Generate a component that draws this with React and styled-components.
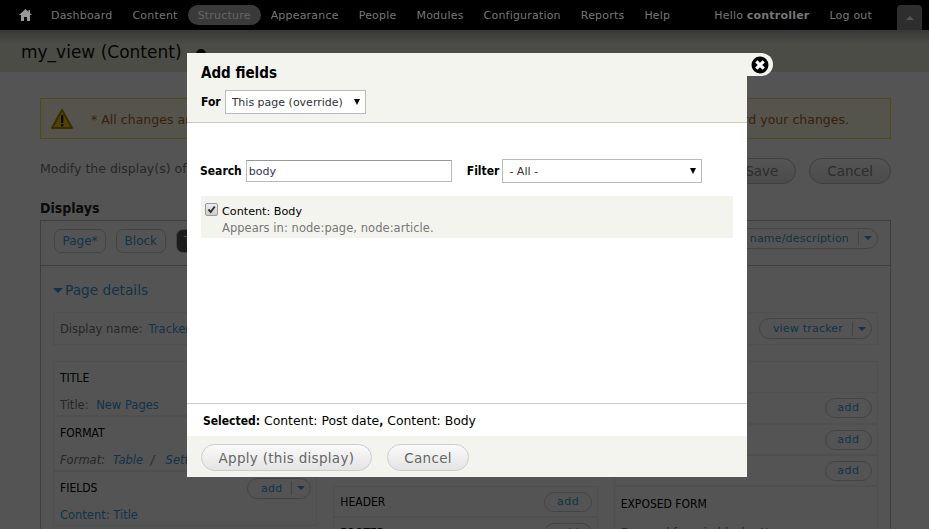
import React from 'react'
import styled, { createGlobalStyle } from 'styled-components'

const Global = createGlobalStyle`
  html, body { margin: 0; padding: 0; height: 529px; overflow: hidden; background: #fff; }
  body, input, select, button { font-family: "DejaVu Sans", Verdana, sans-serif; }
`

const boldFont = `"DejaVu Sans Condensed", "DejaVu Sans", sans-serif`
const link = 'rgb(55, 155, 215)'

const Page = styled.div`
  position: relative;
  width: 929px;
  height: 529px;
  overflow: hidden;
  color: #777;
  font-size: 12.5px;
`

const Toolbar = styled.div`
  position: relative;
  z-index: 2;
  display: flex;
  align-items: center;
  height: 30px;
  background: #000;
  padding: 0 0 0 19px;
  font-size: 11px;
  color: #777;
  letter-spacing: 0.2px;
  white-space: nowrap;
`

const HomeIcon = styled.svg`
  flex: none;
  width: 13px;
  height: 12px;
  margin-right: 9px;
  fill: #999;
`

const NavList = styled.div`
  display: flex;
  align-items: center;
`

const NavItem = styled.span`
  padding: 0 10px;
  height: 20px;
  line-height: 21px;
  border-radius: 10px;
  background: ${p => (p.$active ? '#3a3a3a' : 'transparent')};
  color: ${p => (p.$active ? '#666' : '#777')};
`

const UserMenu = styled.div`
  display: flex;
  align-items: center;
  margin-left: 34px;
  gap: 20px;
  line-height: 21px;
  b { font-weight: bold; }
`

const ToggleTab = styled.div`
  flex: none;
  width: 25px;
  height: 25px;
  margin-left: 25px;
  align-self: flex-end;
  background: #2e2e2e;
  border-radius: 4px 4px 0 0;
  display: flex;
  align-items: center;
  justify-content: center;
  &::after {
    content: '';
    border: 4px solid transparent;
    border-top: 0;
    border-bottom: 4px solid #555;
  }
`

const Header = styled.div`
  height: 42px;
  box-sizing: border-box;
  padding: 0 0 0 21px;
  background: linear-gradient(#a8a8a2, #e3e6d4 32%, #e3e6d4);
  font-size: 17px;
  color: #111;
  overflow: hidden;
`

const Crumb = styled.div`
  margin-top: -9px;
  height: 11px;
  line-height: 11px;
  font-size: 11.5px;
  color: ${link};
  white-space: nowrap;
`

const HeadLine = styled.div`
  display: flex;
  align-items: center;
  margin-top: 8px;
  height: 24px;
  &::after {
    content: '';
    width: 10px;
    height: 10px;
    margin: 4px 0 0 14px;
    border-radius: 50%;
    background: #111;
  }
`

const Content = styled.div`
  padding: 26px 38px 0 40px;
`

const Warning = styled.div`
  display: flex;
  align-items: center;
  height: 41px;
  box-sizing: border-box;
  border: 1px solid #ed5;
  background: #fffde8;
  color: #a8662a;
  padding-left: 10px;
  gap: 18px;
  white-space: nowrap;
  span { padding-top: 1px; letter-spacing: 0.02px; }
`

const WarnIcon = styled.svg`
  flex: none;
  width: 22px;
  height: 20px;
`

const ActionRow = styled.div`
  display: flex;
  align-items: center;
  margin-top: 18px;
  height: 28px;
`

const Lead = styled.span`
  margin-bottom: 6px;
`

const Grow = styled.div`
  flex: 1;
`

const PillButton = styled.div`
  height: 24px;
  line-height: 25px;
  padding: 0 17px;
  margin-left: 13px;
  border: 1px solid #bbb;
  border-radius: 14px;
  background: linear-gradient(#fff, #e4e4e4);
  font-size: 13.5px;
  color: #888;
`

const Title = styled.div`
  margin-top: 14px;
  font-family: ${boldFont};
  font-size: 14px;
  font-weight: bold;
  color: #222;
  line-height: 18px;
`

const TabBar = styled.div`
  display: flex;
  align-items: center;
  height: 46px;
  margin-top: 3px;
  box-sizing: border-box;
  border: 1px solid #bbb;
  padding: 0 12px 0 13px;
  gap: 10px;
`

const Tab = styled.div`
  height: 22px;
  line-height: 22px;
  margin-bottom: 4px;
  padding: 0 7.5px;
  border: 1px solid #ccc;
  border-radius: 7px;
  color: ${p => (p.$dark ? '#fff' : link)};
  background: ${p => (p.$dark ? '#555' : '#fff')};
  font-size: 12px;
`

const DropButton = styled.div`
  display: flex;
  align-items: center;
  height: ${p => p.$h || 19}px;
  margin-left: ${p => (p.$push ? 'auto' : '0')};
  margin-bottom: ${p => (p.$push ? '10px' : '0')};
  padding-left: 13px;
  border: 1px solid #ccc;
  border-radius: 11px;
  font-size: 11px;
  font-weight: normal;
  letter-spacing: 0.2px;
  color: ${link};
  font-family: "DejaVu Sans", sans-serif;
  span {
    display: flex;
    align-items: center;
    justify-content: center;
    width: 18px;
    height: 14px;
    margin-left: 9px;
    border-left: 1px solid #ccc;
  }
  span::after {
    content: '';
    border: 4px solid transparent;
    border-bottom: 0;
    border-top: 4px solid ${link};
  }
`

const Details = styled.div`
  border: 1px solid #bbb;
  border-top: 0;
  padding: 14px 12px 0 12px;
  height: 300px;
`

const DetailsTitle = styled.div`
  font-size: 13.7px;
  color: ${link};
  line-height: 20px;
  display: flex;
  align-items: center;
  gap: 2px;
  &::before {
    content: '';
    border: 5px solid transparent;
    border-bottom: 0;
    border-top: 5px solid ${link};
  }
`

const NameRow = styled.div`
  display: flex;
  align-items: center;
  height: 33px;
  box-sizing: border-box;
  margin-top: 12px;
  padding: 0 5px 0 6px;
  border: 1px solid #eee;
  font-size: 11.5px;
  a { color: ${link}; margin-left: 6px; }
`

const Columns = styled.div`
  display: grid;
  grid-template-columns: repeat(3, 1fr);
  gap: 16px;
  margin-top: 16px;
`

const Col = styled.div`
  padding-top: ${p => p.$top || 0}px;
`

const Bucket = styled.div`
  display: flex;
  align-items: center;
  justify-content: space-between;
  height: ${p => p.$h || 31}px;
  box-sizing: border-box;
  padding: 0 5px 0 6px;
  font-family: ${boldFont};
  font-size: 12px;
  font-weight: 500;
  color: #000;
  border: 1px solid #eee;
  border-bottom: ${p => (p.$open ? '0' : '1px solid #eee')};
  white-space: nowrap;
`

const Line = styled.div`
  height: ${p => p.$h || 22}px;
  line-height: ${p => p.$h || 22}px;
  box-sizing: border-box;
  padding: 0 6px;
  font-size: 11.5px;
  color: #777;
  white-space: nowrap;
  border: 1px solid #eee;
  border-top: 0;
  i { font-style: italic; }
  a { color: ${link}; margin-left: 4px; }
`

const PlainLink = styled.span`
  color: ${link};
`

const AddButton = styled.div`
  height: 18px;
  line-height: 18px;
  padding: 0 11.5px;
  border: 1px solid #ccc;
  border-radius: 10px;
  font-family: "DejaVu Sans", sans-serif;
  font-size: 11px;
  letter-spacing: 0.5px;
  color: ${link};
`

const Overlay = styled.div`
  position: absolute;
  inset: 0;
  z-index: 1;
  background: rgba(0, 0, 0, 0.67);
`

const Modal = styled.div`
  position: absolute;
  z-index: 3;
  left: 187px;
  top: 53px;
  width: 560px;
  height: 424px;
  display: flex;
  flex-direction: column;
  background: #fff;
  color: #000;
  font-size: 12px;
`

const CloseTab = styled.div`
  position: absolute;
  left: 560px;
  top: 0;
  width: 26px;
  height: 23px;
  background: #f3f4ee;
  border-radius: 0 12px 12px 0;
  svg { position: absolute; left: 4px; top: 3px; width: 18px; height: 18px; }
`

const ModalTop = styled.div`
  height: 70px;
  box-sizing: border-box;
  padding: 11px 14px 0;
  background: #f3f4ee;
  border-bottom: 1px solid #ccc;
`

const ModalTitle = styled.div`
  font-family: ${boldFont};
  font-size: 15px;
  font-weight: bold;
  line-height: 18px;
`

const ForRow = styled.div`
  display: flex;
  align-items: center;
  gap: 4px;
  margin-top: 8px;
  font-family: ${boldFont};
  font-weight: bold;
  font-size: 12px;
`

const SelectWrap = styled.div`
  position: relative;
  display: flex;
  &::after {
    content: '';
    position: absolute;
    right: ${p => p.$arrow}px;
    top: 9px;
    border: 3.5px solid transparent;
    border-bottom: 0;
    border-top: 6px solid #000;
    pointer-events: none;
  }
`

const Select = styled.select`
  appearance: none;
  height: 24px;
  width: ${p => p.$w}px;
  box-sizing: border-box;
  padding: 0 0 0 6px;
  border: 1px solid #bbb;
  border-radius: 0;
  background: #fff;
  font-family: "DejaVu Sans", sans-serif;
  font-size: 11px;
  font-weight: normal;
  color: #333;
`

const ModalBody = styled.div`
  flex: 1;
  padding: 36px 14px 0 13px;
`

const SearchRow = styled.div`
  display: flex;
  align-items: center;
  height: 24px;
  font-family: ${boldFont};
  font-weight: bold;
  font-size: 12px;
`

const SearchInput = styled.input`
  width: 206px;
  height: 22px;
  box-sizing: border-box;
  margin: 0 15px 0 4px;
  padding: 0 2px;
  border: 1px solid #bbb;
  border-top-color: #999;
  font-family: "DejaVu Sans", sans-serif;
  font-size: 11px;
  font-weight: normal;
  color: #335;
  outline: none;
`

const FilterLabel = styled.span`
  margin-right: 3px;
`

const ResultRow = styled.div`
  display: flex;
  margin: 13px 0 0 1px;
  height: 42px;
  box-sizing: border-box;
  padding: 6px 4px 0;
  background: #f3f4ee;
  gap: 4px;
`

const Check = styled.div`
  width: 11px;
  height: 11px;
  margin-top: 1px;
  border: 1px solid #999;
  border-radius: 2px;
  background: linear-gradient(#eee, #ccc);
  svg { display: block; width: 11px; height: 11px; }
`

const ResultText = styled.div`
  line-height: 17px;
  font-size: 11.2px;
  padding-top: 1px;
  div + div { color: #777; font-size: 11.5px; letter-spacing: 0.05px; }
`

const SelectedRow = styled.div`
  height: 33px;
  box-sizing: border-box;
  border-top: 1px solid #ccc;
  padding: 8px 16px 0;
  line-height: 18px;
  font-size: 12.4px;
  white-space: nowrap;
  b { font-family: ${boldFont}; font-size: 12px; }
`

const ModalFoot = styled.div`
  height: 41px;
  display: flex;
  align-items: flex-start;
  gap: 15px;
  padding: 8px 14px 0;
  box-sizing: border-box;
  background: #f3f4ee;
`

const FootButton = styled.div`
  height: 25px;
  line-height: 26px;
  padding: 0 16.5px;
  border: 1px solid #ccc;
  border-radius: 14px;
  background: linear-gradient(#fafafa, #e4e4e4);
  font-size: 13.5px;
  letter-spacing: 0.3px;
  color: #666;
`

export default function App() {
  return (
    <Page>
      <Global />
      <Toolbar>
        <HomeIcon viewBox="0 0 13 12">
          <path d="M6.5 0 L9.5 2.8 L9.5 1 L11 1 L11 4.2 L13 6 L11 6 L11 12 L8 12 L8 8 L5 8 L5 12 L2 12 L2 6 L0 6 Z" />
        </HomeIcon>
        <NavList>
          {['Dashboard', 'Content'].map(n => <NavItem key={n}>{n}</NavItem>)}
          <NavItem $active>Structure</NavItem>
          {['Appearance', 'People', 'Modules', 'Configuration', 'Reports', 'Help'].map(n => <NavItem key={n}>{n}</NavItem>)}
        </NavList>
        <UserMenu>
          <span>Hello <b>controller</b></span>
          <span>Log out</span>
        </UserMenu>
        <ToggleTab />
      </Toolbar>
      <Header>
        <Crumb>Home » Administration » Structure » Views</Crumb>
        <HeadLine>my_view (Content)</HeadLine>
      </Header>
      <Content>
        <Warning>
          <WarnIcon viewBox="0 0 22 20">
            <path d="M11 1 L21 19 L1 19 Z" fill="#fc0" stroke="#a80" strokeWidth="2" strokeLinejoin="round" />
            <rect x="10" y="6" width="2.4" height="8" fill="#222" />
            <rect x="10" y="15" width="2.4" height="2.4" fill="#222" />
          </WarnIcon>
          <span>* All changes are stored temporarily. Click Save to make your changes permanent. Click Cancel to discard your changes.</span>
        </Warning>
        <ActionRow>
          <Lead>Modify the display(s) of your view below or add new displays.</Lead>
          <Grow />
          <PillButton>Save</PillButton>
          <PillButton>Cancel</PillButton>
        </ActionRow>
        <Title>Displays</Title>
        <TabBar>
          <Tab>Page*</Tab>
          <Tab>Block</Tab>
          <Tab $dark>Tracker</Tab>
          <DropButton $push>edit view name/description<span /></DropButton>
        </TabBar>
        <Details>
          <DetailsTitle>Page details</DetailsTitle>
          <NameRow>
            Display name: <a>Tracker</a>
            <Grow />
            <DropButton>view tracker<span /></DropButton>
          </NameRow>
          <Columns>
            <Col>
              <Bucket $h={33} $open>TITLE</Bucket>
              <Line>Title: <a>New Pages</a></Line>
              <Bucket $h={33} $open>FORMAT</Bucket>
              <Line><i>Format: <a>Table</a> &nbsp;/&nbsp; <a>Settings</a></i></Line>
              <Bucket $h={33} $open>FIELDS<DropButton>add<span /></DropButton></Bucket>
              <Line><PlainLink>Content: Title</PlainLink></Line>
            </Col>
            <Col $top={125}>
              <Bucket>HEADER<AddButton>add</AddButton></Bucket>
              <Bucket>FOOTER<AddButton>add</AddButton></Bucket>
            </Col>
            <Col>
              <Bucket $h={31} $open>ADVANCED</Bucket>
              <Bucket $h={32}>CONTEXTUAL FILTERS<AddButton>add</AddButton></Bucket>
              <Bucket>RELATIONSHIPS<AddButton>add</AddButton></Bucket>
              <Bucket>NO RESULTS BEHAVIOR<AddButton>add</AddButton></Bucket>
              <Bucket $h={34} $open>EXPOSED FORM</Bucket>
              <Line $h={26}>Exposed form in block: <a>No</a></Line>
            </Col>
          </Columns>
        </Details>
      </Content>
      <Overlay />
      <Modal>
        <CloseTab>
          <svg viewBox="0 0 18 18">
            <circle cx="9" cy="9" r="8.5" fill="#000" />
            <path d="M5.3 5.3 L12.7 12.7 M12.7 5.3 L5.3 12.7" stroke="#fff" strokeWidth="3.2" />
          </svg>
        </CloseTab>
        <ModalTop>
          <ModalTitle>Add fields</ModalTitle>
          <ForRow>
            For
            <SelectWrap $arrow={6}>
              <Select $w={141} defaultValue="page"><option value="page">This page (override)</option></Select>
            </SelectWrap>
          </ForRow>
        </ModalTop>
        <ModalBody>
          <SearchRow>
            Search
            <SearchInput defaultValue="body" />
            <FilterLabel>Filter</FilterLabel>
            <SelectWrap $arrow={6}>
              <Select $w={200} defaultValue="all"><option value="all">- All -</option></Select>
            </SelectWrap>
          </SearchRow>
          <ResultRow>
            <Check>
              <svg viewBox="0 0 11 11"><path d="M2.5 5.5 L4.7 8 L8.8 2.5" fill="none" stroke="#333" strokeWidth="2" /></svg>
            </Check>
            <ResultText>
              <div>Content: Body</div>
              <div>Appears in: node:page, node:article.</div>
            </ResultText>
          </ResultRow>
        </ModalBody>
        <SelectedRow><b>Selected:</b> Content: Post date<b>,</b> Content: Body</SelectedRow>
        <ModalFoot>
          <FootButton>Apply (this display)</FootButton>
          <FootButton>Cancel</FootButton>
        </ModalFoot>
      </Modal>
    </Page>
  )
}
